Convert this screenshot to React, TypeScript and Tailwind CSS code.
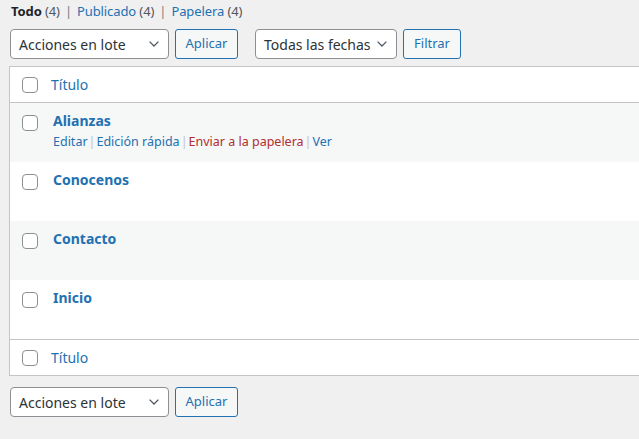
import React from "react";

const font = { fontFamily: '"Noto Sans", "DejaVu Sans", sans-serif' };

function Chevron() {
  return (
    <svg width="16" height="16" viewBox="0 0 20 20" className="text-[#50575e]">
      <path d="M4.5 7l5.5 5.5 5.5-5.5" fill="none" stroke="currentColor" strokeWidth="1.6" />
    </svg>
  );
}

function Select({ label, width }: { label: string; width: string }) {
  return (
    <div
      className={`${width} h-[30px] flex items-center justify-between pl-[8px] pr-[6px] bg-white border border-[#8c8f94] rounded-[4px] text-[14px] text-[#2c3338]`}
    >
      <span>{label}</span>
      <Chevron />
    </div>
  );
}

function Button({ label, width }: { label: string; width: string }) {
  return (
    <div
      className={`${width} h-[30px] flex items-center justify-center bg-[#f6f7f7] border border-[#2271b1] rounded-[3px] text-[13px] text-[#2271b1]`}
    >
      {label}
    </div>
  );
}

function Checkbox() {
  return <div className="w-[16px] h-[16px] border border-[#8c8f94] rounded-[4px] bg-white shrink-0" />;
}

function Sep() {
  return <span className="text-[#787c82] px-[5px]">|</span>;
}

function ActSep() {
  return <span className="text-[#c3c4c7] px-[1px]">|</span>;
}

const pages = ["Alianzas", "Conocenos", "Contacto", "Inicio"];

export default function App() {
  return (
    <div className="w-[639px] h-[439px] overflow-hidden bg-[#f0f0f1]" style={font}>
      <div className="pl-[11px] pt-[1px] h-[29px] text-[13px] leading-[20px] text-[#50575e] tracking-[-0.1px]">
        <span className="font-bold text-[#1d2327]">Todo</span> (4)
        <Sep />
        <span className="text-[#2271b1]">Publicado</span> (4)
        <Sep />
        <span className="text-[#2271b1]">Papelera</span> (4)
      </div>

      <div className="flex items-center pl-[10px] h-[30px]">
        <Select label="Acciones en lote" width="w-[159px]" />
        <div className="w-[6px]" />
        <Button label="Aplicar" width="w-[63px]" />
        <div className="w-[17px]" />
        <Select label="Todas las fechas" width="w-[142px]" />
        <div className="w-[6px]" />
        <Button label="Filtrar" width="w-[58px]" />
      </div>

      <div className="ml-[9px] mt-[7px] w-[700px] bg-white border border-[#c3c4c7]">
        <div className="h-[36px] flex items-center border-b border-[#c3c4c7] pl-[12px]">
          <Checkbox />
          <span className="ml-[13px] text-[14px] text-[#2271b1]">Título</span>
        </div>
        {pages.map((p, i) => (
          <div key={p} className={`h-[59px] flex pl-[12px] pt-[12px] ${i % 2 === 0 ? "bg-[#f6f7f7]" : "bg-white"}`}>
            <Checkbox />
            <div className="ml-[15px] -mt-[4px]">
              <div className="text-[14px] font-bold text-[#2271b1] leading-[20px]">{p}</div>
              {i === 0 && (
                <div className="mt-[2px] text-[12.5px] leading-[18px] text-[#2271b1]">
                  Editar
                  <ActSep />
                  Edición rápida
                  <ActSep />
                  <span className="text-[#b32d2e]">Enviar a la papelera</span>
                  <ActSep />
                  Ver
                </div>
              )}
            </div>
          </div>
        ))}
        <div className="h-[36px] flex items-center border-t border-[#c3c4c7] pl-[12px]">
          <Checkbox />
          <span className="ml-[13px] text-[14px] text-[#2271b1]">Título</span>
        </div>
      </div>

      <div className="flex items-center pl-[10px] mt-[11px]">
        <Select label="Acciones en lote" width="w-[159px]" />
        <div className="w-[6px]" />
        <Button label="Aplicar" width="w-[63px]" />
      </div>
    </div>
  );
}
